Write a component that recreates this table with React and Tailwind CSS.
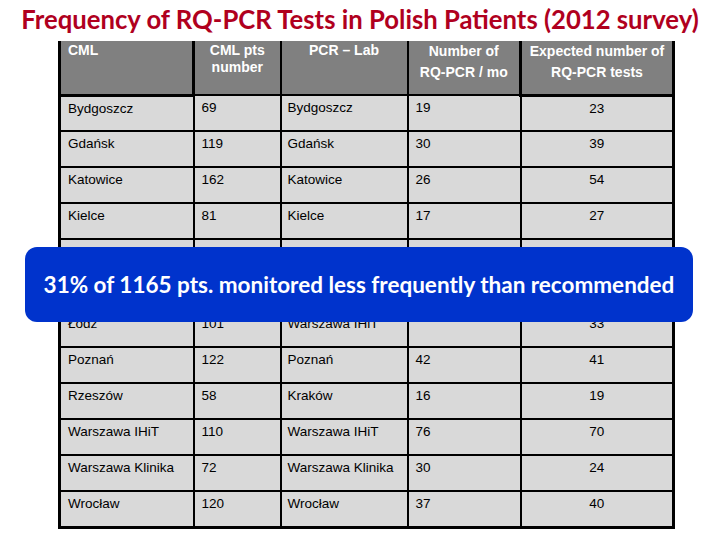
const rows = [
  ["Bydgoszcz", "69", "Bydgoszcz", "19", "23"],
  ["Gdańsk", "119", "Gdańsk", "30", "39"],
  ["Katowice", "162", "Katowice", "26", "54"],
  ["Kielce", "81", "Kielce", "17", "27"],
  ["Kraków", "154", "Kraków", "35", "51"],
  ["Lublin", "97", "Lublin", "24", "32"],
  ["Łódź", "101", "Warszawa IHiT", "", "33"],
  ["Poznań", "122", "Poznań", "42", "41"],
  ["Rzeszów", "58", "Kraków", "16", "19"],
  ["Warszawa IHiT", "110", "Warszawa IHiT", "76", "70"],
  ["Warszawa Klinika", "72", "Warszawa Klinika", "30", "24"],
  ["Wrocław", "120", "Wrocław", "37", "40"],
];

export default function App() {
  return (
    <div className="relative w-[720px] h-[540px] bg-white overflow-hidden font-['Liberation_Sans',Arial,sans-serif]">
      <h1 className="h-[41px] pt-[4px] text-center font-['Lato',sans-serif] font-bold text-[25.7px] leading-[30px] text-[#b0001e] whitespace-nowrap">
        Frequency of RQ-PCR Tests in Polish Patients (2012 survey)
      </h1>
      <table className="ml-[58px] w-[614px] table-fixed border-collapse text-[13.5px]">
        <colgroup>
          <col className="w-[134px]" />
          <col className="w-[87px]" />
          <col className="w-[127px]" />
          <col className="w-[113px]" />
          <col className="w-[153px]" />
        </colgroup>
        <thead className="bg-[#808080] text-white font-bold text-[14px]">
          <tr className="h-[54px] align-top">
            <th className="border-[3px] border-t-0 border-black px-[7px] pt-[1px] text-left font-bold leading-[16px]">CML</th>
            <th className="border-2 border-t-0 border-black pt-[1px] text-center font-bold leading-[17px]">
              CML pts<br />number
            </th>
            <th className="border-2 border-t-0 border-black pt-[1px] text-center font-bold leading-[16px]">PCR – Lab</th>
            <th className="border-2 border-t-0 border-black pt-0 text-center font-bold leading-[21px]">
              Number of<br />RQ-PCR / mo
            </th>
            <th className="border-[3px] border-t-0 border-black pt-0 text-center font-bold leading-[21px] whitespace-nowrap">
              Expected number of<br />RQ-PCR tests
            </th>
          </tr>
        </thead>
        <tbody className="bg-[#d9d9d9] text-black">
          {rows.map((r, i) => (
            <tr key={i} className="h-[36px] align-top">
              <td className="border-2 border-l-[3px] border-black px-[7px] pt-[4px] leading-[16px]">{r[0]}</td>
              <td className="border-2 border-black px-[7px] pt-[4px] leading-[16px]">{r[1]}</td>
              <td className="border-2 border-black px-[6px] pt-[4px] leading-[16px] whitespace-nowrap">{r[2]}</td>
              <td className="border-2 border-black px-[7px] pt-[4px] leading-[16px]">{r[3]}</td>
              <td className="border-2 border-r-[3px] border-black pt-[4px] text-center leading-[16px]">{r[4]}</td>
            </tr>
          ))}
        </tbody>
        <tfoot>
          <tr>
            <td colSpan={5} className="border-t-[3px] border-black" />
          </tr>
        </tfoot>
      </table>
      <div className="absolute left-[25px] top-[247px] w-[668px] h-[75px] rounded-[12px] bg-[#0033cc] flex items-center justify-center">
        <span className="font-['Lato',sans-serif] font-bold text-[22.5px] text-white whitespace-nowrap">
          31% of 1165 pts. monitored less frequently than recommended
        </span>
      </div>
    </div>
  );
}
